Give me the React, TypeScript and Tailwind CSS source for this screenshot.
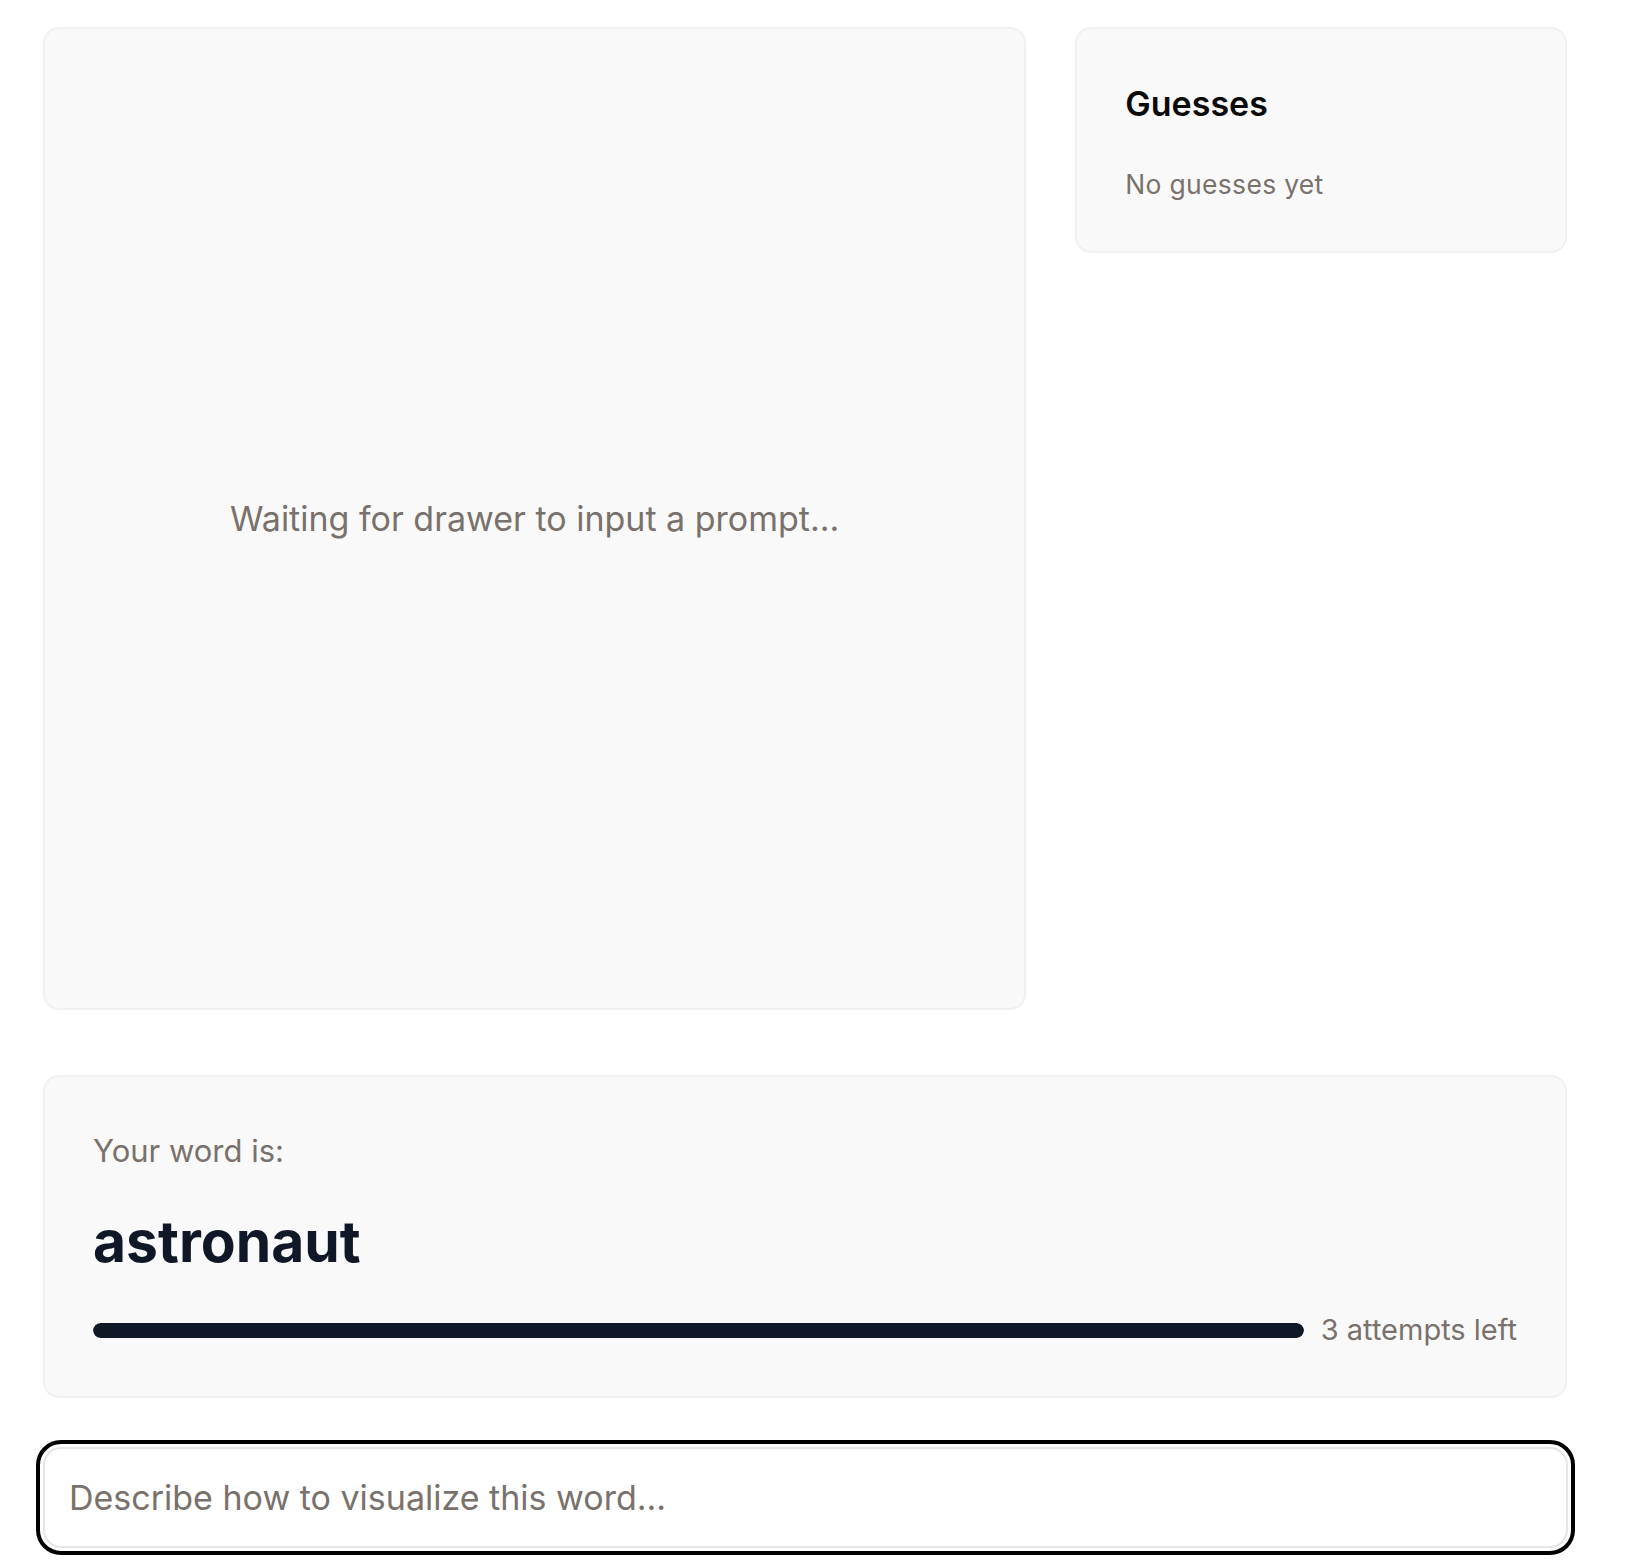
export default function App() {
  const attemptsLeft = 3;
  const maxAttempts = 3;

  return (
    <div className="min-h-screen bg-white font-['Inter','Noto_Sans',sans-serif] pl-[43px] pt-[27px]">
      <div className="w-[1524px]">
        {/* Canvas + guesses */}
        <div className="grid grid-cols-[2fr_1fr] gap-[49px] items-start">
          <div className="aspect-square flex items-center justify-center rounded-[16px] border-2 border-[#f0f0f0] bg-[#f9f9f9]">
            <p className="text-[34px] leading-[48px] text-stone-500">
              Waiting for drawer to input a prompt...
            </p>
          </div>

          <div className="rounded-[16px] border-2 border-[#f0f0f0] bg-[#f9f9f9] px-[48px] pt-[55px] pb-[49px]">
            <h2 className="text-[34px] leading-[40px] font-semibold text-[#0a0a0a]">Guesses</h2>
            <p className="mt-[42px] text-[26.5px] leading-[36px] tracking-[0.3px] text-stone-500">
              No guesses yet
            </p>
          </div>
        </div>

        {/* Word card */}
        <div className="mt-[65px] rounded-[16px] border-2 border-[#f0f0f0] bg-[#f9f9f9] px-[48px] pt-[51px] pb-[48px]">
          <p className="text-[31px] leading-[45px] text-stone-500">Your word is:</p>
          <h1 className="mt-[39px] text-[57px] leading-[60px] font-bold text-gray-900">astronaut</h1>
          <div className="mt-[40px] flex items-center gap-[17px] h-[36px]">
            <div className="flex-1 h-[15px] rounded-full bg-gray-200 overflow-hidden">
              <div
                className="h-full rounded-full bg-gray-900"
                style={{ width: `${(attemptsLeft / maxAttempts) * 100}%` }}
              />
            </div>
            <span className="text-[29px] leading-[36px] text-stone-500">
              {attemptsLeft} attempts left
            </span>
          </div>
        </div>

        {/* Prompt input */}
        <input
          type="text"
          placeholder="Describe how to visualize this word..."
          className="mt-[49px] block w-[1525px] h-[101px] rounded-[18px] border-2 border-[#e5e5e5] bg-white px-[24px] text-[34px] text-gray-900 placeholder:text-stone-500 outline-4 outline-offset-[3px] outline-black"
        />
      </div>
    </div>
  );
}
